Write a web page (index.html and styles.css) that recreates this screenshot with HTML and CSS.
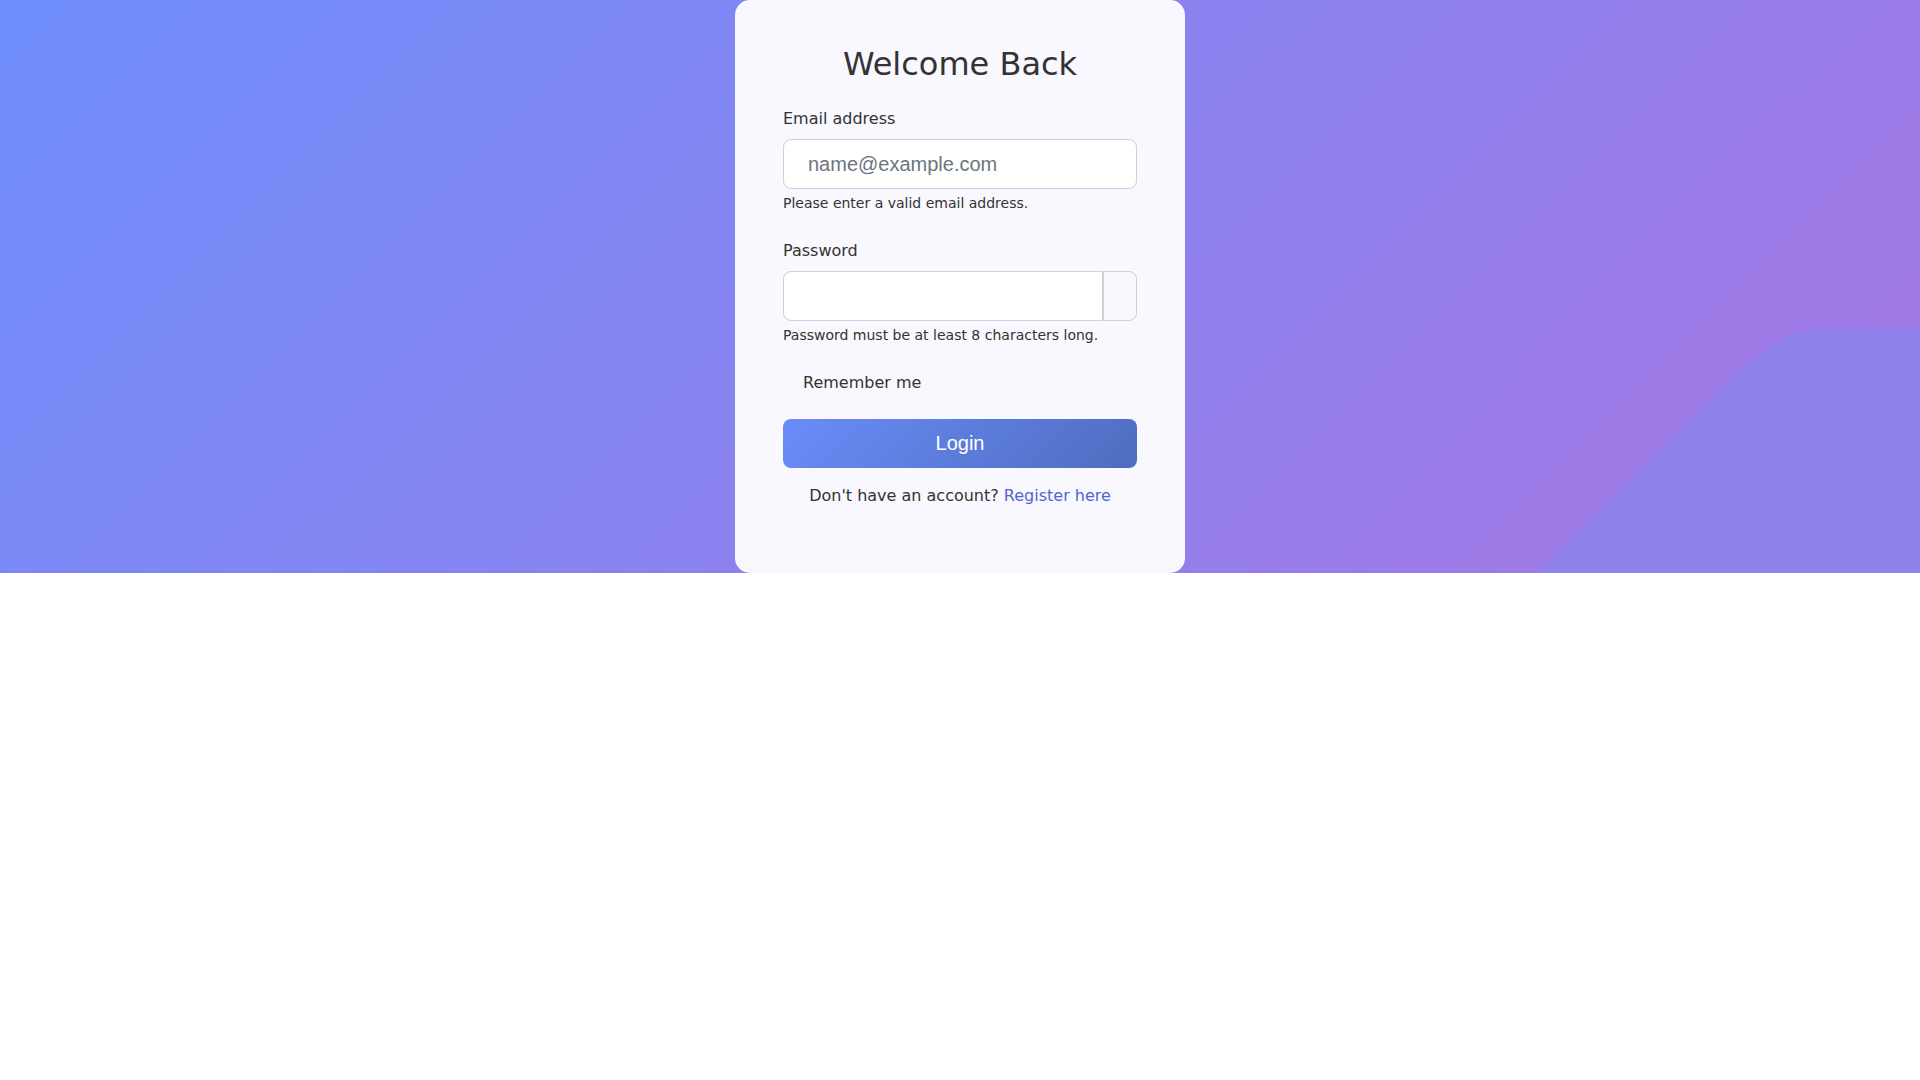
FILE: index.html
```html
<!DOCTYPE html>
<html lang="en">
<head>
  <meta charset="UTF-8" />
  <meta name="viewport" content="width=device-width, initial-scale=1" />
  <title>Login</title>
  <link rel="stylesheet" href="styles.css">
</head>

<body>
  <div class="page">
    <!-- decorative wave, bottom right -->
    <svg class="wave" width="382" height="245" viewBox="0 0 382 245" aria-hidden="true">
      <path d="M0 245 L202 43 Q245 0 292 0 L382 0 L382 245 Z" fill="#8f82eb" />
    </svg>

    <div class="card">
      <h2 class="title">Welcome Back</h2>

      <form id="loginForm" novalidate>
        <div class="group">
          <label class="label" for="email">Email address</label>
          <input class="field" type="email" id="email" placeholder="name@example.com" />
          <div class="help">Please enter a valid email address.</div>
        </div>

        <div class="group">
          <label class="label" for="password">Password</label>
          <div class="input-group">
            <input class="field" type="password" id="password" />
            <button type="button" class="toggle" id="togglePassword"></button>
          </div>
          <div class="help">Password must be at least 8 characters long.</div>
        </div>

        <div class="check">
          <input type="checkbox" id="remember" />
          <label for="remember">Remember me</label>
        </div>

        <button type="submit" class="btn-login">Login</button>

        <p class="register">Don't have an account? <a href="#">Register here</a></p>
      </form>
    </div>
  </div>
</body>
</html>
```

FILE: styles.css
```css
* {
  box-sizing: border-box;
}

body {
  margin: 0;
  background-color: #ffffff;
  color: #333333;
  font-family: "DejaVu Sans", sans-serif;
  font-size: 16px;
  line-height: 1.5;
}

.page {
  position: relative;
  display: flex;
  justify-content: center;
  background: linear-gradient(135deg, #6e8efb, #a777e3);
  overflow: hidden;
}

.wave {
  position: absolute;
  right: 0;
  bottom: 0;
}

.card {
  position: relative;
  z-index: 1;
  width: 450px;
  padding: 45px 48px 49px;
  background: #f8f8fe;
  border-radius: 15px;
}

.title {
  margin: 0 0 24px;
  font-size: 32px;
  font-weight: normal;
  line-height: 1.2;
  text-align: center;
  color: #333333;
}

.group {
  margin-bottom: 25px;
}

.label {
  display: block;
  margin-bottom: 8px;
}

.field {
  display: block;
  width: 100%;
  height: 50px;
  padding: 0 24px;
  border: 1px solid #cfcfdb;
  border-radius: 8px;
  background: #ffffff;
  font-family: "Liberation Sans", Arial, sans-serif;
  font-size: 20px;
  color: #333333;
  outline: none;
}

.field::placeholder {
  color: #6c757d;
}

.help {
  margin-top: 4px;
  font-size: 14px;
  color: #333333;
}

.input-group {
  display: flex;
}

.input-group .field {
  flex: 1;
  border-radius: 8px 0 0 8px;
}

.toggle {
  width: 34px;
  height: 50px;
  padding: 0;
  border: 1px solid #cfcfdb;
  border-radius: 0 8px 8px 0;
  background: transparent;
  cursor: pointer;
}

.check {
  display: flex;
  align-items: center;
  margin-bottom: 24px;
}

.check input {
  appearance: none;
  width: 16px;
  height: 16px;
  margin: 0 4px 0 0;
}

.btn-login {
  display: block;
  width: 100%;
  height: 49px;
  border: none;
  border-radius: 8px;
  background: linear-gradient(135deg, #6b8cf9, #4e6dbf);
  color: #ffffff;
  font-family: "Liberation Sans", Arial, sans-serif;
  font-size: 20px;
  cursor: pointer;
}

.register {
  margin: 16px 0;
  text-align: center;
}

.register a {
  color: #5166d0;
  text-decoration: none;
}
```
